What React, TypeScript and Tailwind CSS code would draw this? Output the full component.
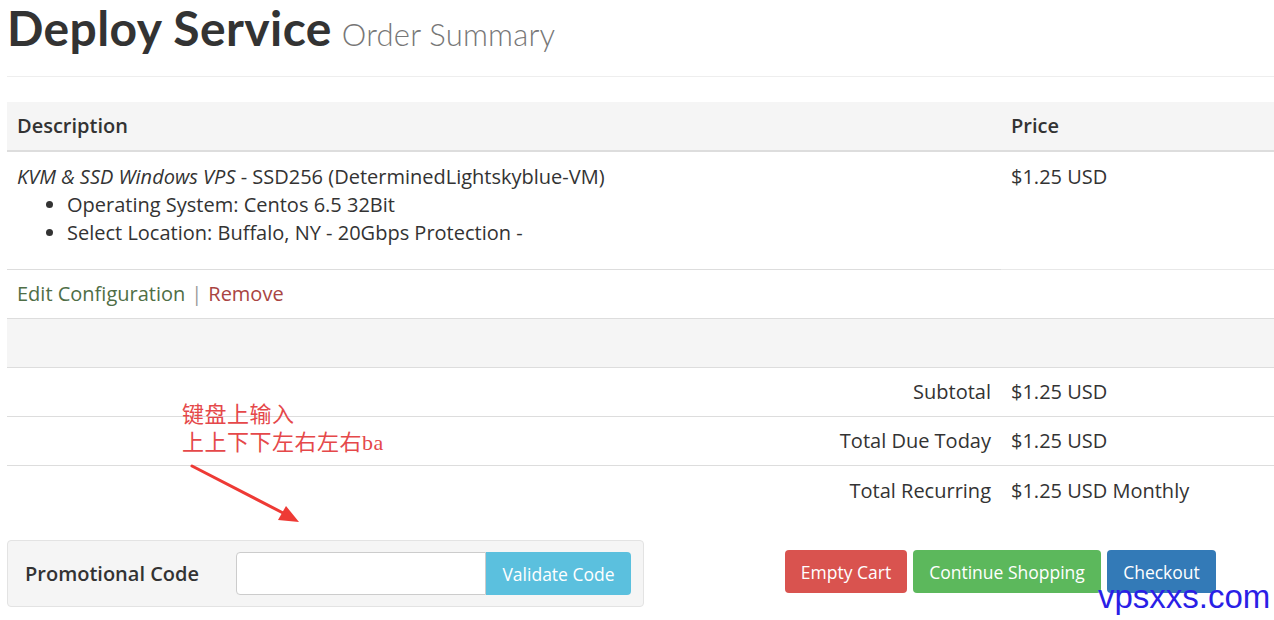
const body = { fontFamily: '"Open Sans", "Liberation Sans", sans-serif' }

function TotalRow({ label, value, last }: { label: string; value: string; last?: boolean }) {
  return (
    <div className={`grid h-[49px] grid-cols-[994px_1fr] items-center ${last ? '' : 'border-b border-[#ddd]'}`}>
      <div className="pr-[10px] text-right">{label}</div>
      <div className="pl-[10px]">{value}</div>
    </div>
  )
}

export default function App() {
  return (
    <div className="relative h-[620px] w-[1274px] overflow-hidden bg-white text-[20px] leading-[28px] text-[#333]" style={body}>
      <div className="pl-[7px]">
        <div className="flex h-[77px] items-start border-b border-[#eee]">
          <h1 className="text-[48px] font-bold leading-[56px] tracking-[0.4px] text-[#333]" style={{ fontFamily: 'Lato, "Liberation Sans", sans-serif' }}>
            Deploy Service
            <span className="ml-[10px] text-[31px] font-light tracking-[0.2px] text-[#777]">Order Summary</span>
          </h1>
        </div>

        <div className="mt-[25px]">
          <div className="grid h-[50px] grid-cols-[994px_1fr] items-center border-b-2 border-[#ddd] bg-[#f5f5f5] font-semibold">
            <div className="pl-[10px]">Description</div>
            <div className="pl-[10px]">Price</div>
          </div>

          <div className="grid grid-cols-[994px_1fr]">
            <div className="border-b border-[#ddd] pb-[22px] pl-[10px] pt-[11px]">
              <div>
                <em>KVM &amp; SSD Windows VPS</em> - SSD256 (DeterminedLightskyblue-VM)
              </div>
              <ul className="list-disc pl-[50px]">
                <li>Operating System: Centos 6.5 32Bit</li>
                <li>Select Location: Buffalo, NY - 20Gbps Protection -</li>
              </ul>
            </div>
            <div className="border-b border-[#e8e8e8] pl-[10px] pt-[11px]">$1.25 USD</div>
          </div>

          <div className="flex h-[49px] items-center border-b border-[#ddd] pl-[10px]">
            <span className="text-[#4f6e46]">Edit Configuration</span>
            <span className="mx-[6px] text-[#999]">|</span>
            <span className="text-[#a94442]">Remove</span>
          </div>

          <div className="h-[49px] border-b border-[#ddd] bg-[#f5f5f5]" />

          <TotalRow label="Subtotal" value="$1.25 USD" />
          <TotalRow label="Total Due Today" value="$1.25 USD" />
          <TotalRow label="Total Recurring" value="$1.25 USD Monthly" last />
        </div>

        <div className="mt-[25px] flex items-start">
          <div className="flex h-[67px] w-[637px] items-center rounded-[4px] border border-[#e3e3e3] bg-[#f5f5f5] pl-[17px]">
            <span className="w-[211px] font-semibold">Promotional Code</span>
            <div className="flex h-[43px]">
              <div className="w-[250px] rounded-l-[4px] border border-[#ccc] bg-white" />
              <button className="w-[145px] rounded-r-[4px] bg-[#5bc0de] text-[17.5px] text-white">Validate Code</button>
            </div>
          </div>

          <div className="ml-[141px] mt-[10px] flex gap-[6px] text-[17.5px]">
            <button className="h-[43px] w-[122px] rounded-[4px] bg-[#d9534f] text-white">Empty Cart</button>
            <button className="h-[43px] w-[188px] rounded-[4px] bg-[#5cb85c] text-white">Continue Shopping</button>
            <button className="h-[43px] w-[109px] rounded-[4px] bg-[#337ab7] text-white">Checkout</button>
          </div>
        </div>
      </div>

      {/* annotation overlay */}
      <div
        className="absolute left-[182px] top-[401px] text-[22px] leading-[28px] tracking-[0.5px] text-[#e5484a]"
        style={{ fontFamily: '"Liberation Serif", "Noto Sans CJK SC", serif' }}
      >
        <div>键盘上输入</div>
        <div>上上下下左右左右ba</div>
      </div>
      <svg className="absolute left-[185px] top-[460px]" width="120" height="70" viewBox="0 0 120 70">
        <line x1="7" y1="6" x2="100" y2="54" stroke="#ee3a35" strokeWidth="3" strokeLinecap="round" />
        <polygon points="114,62 93,60 101,46" fill="#ee3a35" />
      </svg>

      <div className="absolute left-[1098px] top-[577px] text-[33px] leading-[40px] text-[#2b1fe6]" style={{ fontFamily: '"Liberation Sans", Arial, sans-serif' }}>
        vpsxxs.com
      </div>
    </div>
  )
}
